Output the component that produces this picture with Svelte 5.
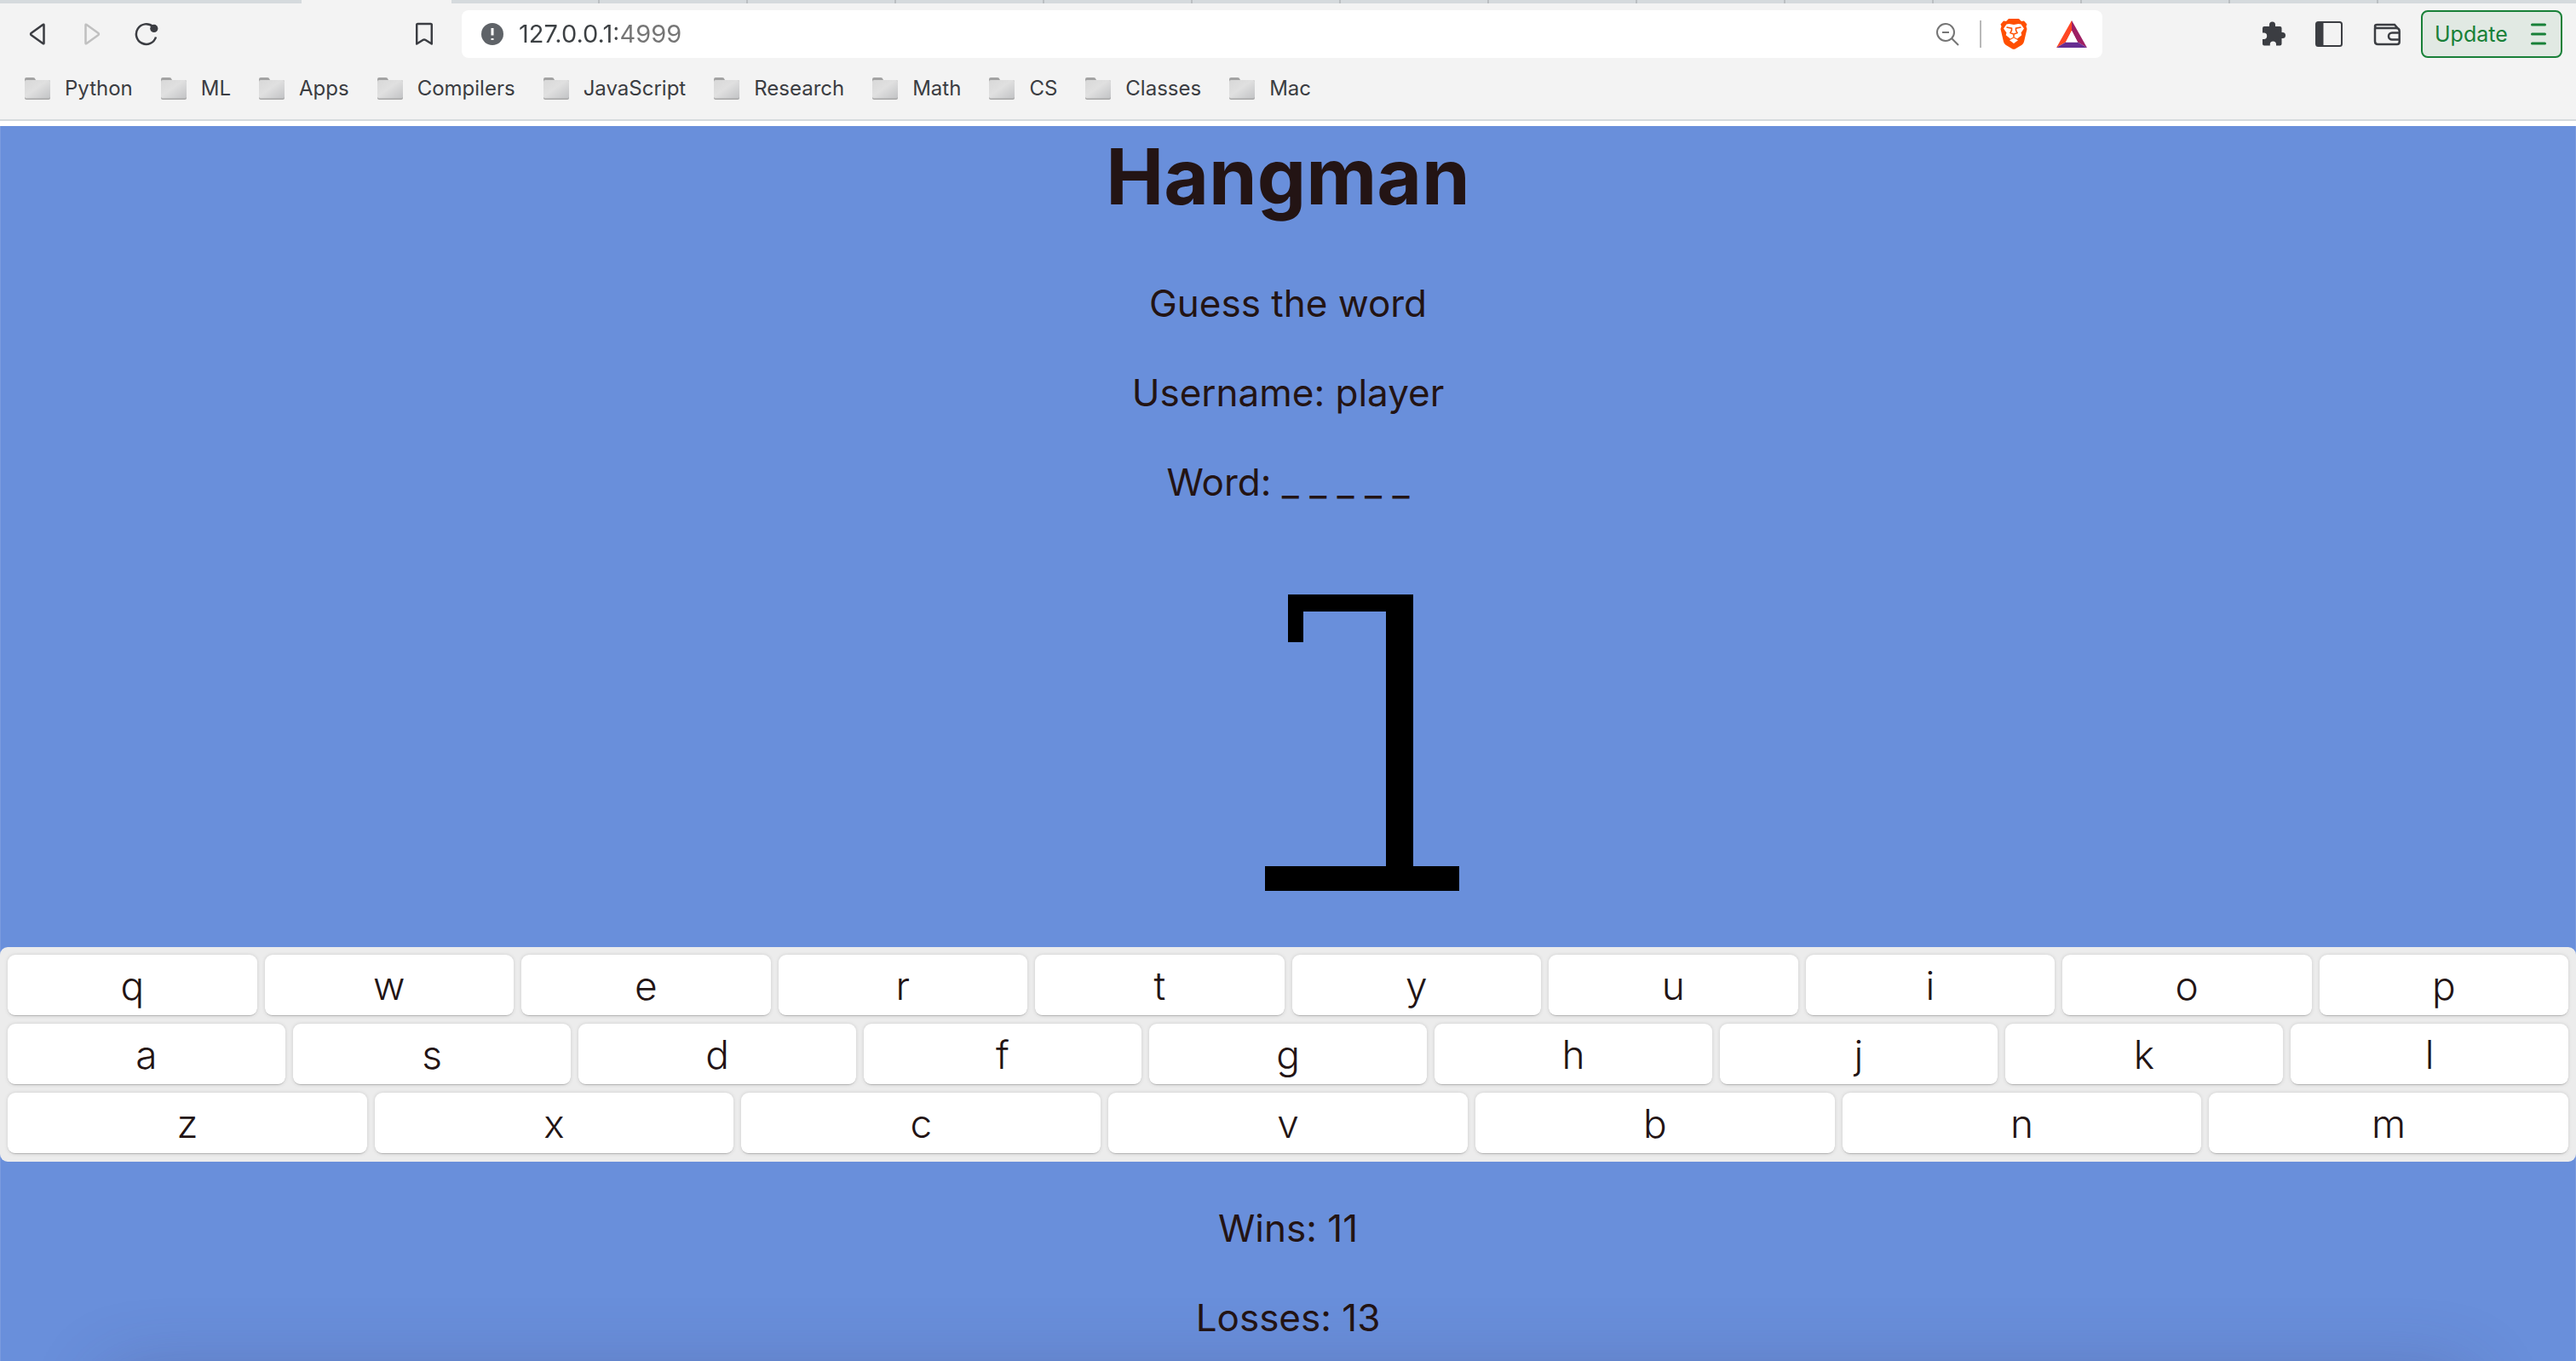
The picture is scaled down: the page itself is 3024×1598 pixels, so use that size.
<script>
  const bookmarks = [
    'Python', 'ML', 'Apps', 'Compilers', 'JavaScript',
    'Research', 'Math', 'CS', 'Classes', 'Mac'
  ];
  const rows = ['qwertyuiop', 'asdfghjkl', 'zxcvbnm'].map((row) => row.split(''));
  const backgroundTabs = Array.from({ length: 13 }, (_, i) => i);

  let address = $state('127.0.0.1:4999');
  const username = 'player';
  const word = '_ _ _ _ _';
  const wins = 11;
  const losses = 13;
</script>

<div class="window">
  <header class="chrome">
    <div class="tabs">
      <span class="tab-lead"></span>
      <span class="tab-active"></span>
      {#each backgroundTabs as tab (tab)}
        <span class="tab"></span>
      {/each}
    </div>

    <div class="toolbar">
      <div class="nav">
        <button type="button" aria-label="Back">
          <svg width="20" height="28" viewBox="0 0 20 28"><path d="M17.5 3.2v21.6q0 .8-.8.4L2.8 15.2q-1.5-1.2 0-2.4L16.7 2.8q.8-.4.8.4z" /></svg>
        </button>
        <button type="button" aria-label="Forward" disabled>
          <svg width="20" height="28" viewBox="0 0 20 28"><path d="M2.5 3.2v21.6q0 .8.8.4l13.9-10q1.5-1.2 0-2.4L3.3 2.8q-.8-.4-.8.4z" /></svg>
        </button>
        <button type="button" aria-label="Reload">
          <svg width="28" height="28" viewBox="0 0 28 28">
            <path d="M21.5 5.2A11.8 11.8 0 1 0 25 17.5" />
            <circle class="solid" cx="22.8" cy="7.4" r="4.6" />
          </svg>
        </button>
      </div>
      <button class="save" type="button" aria-label="Bookmark this page">
        <svg width="20" height="28" viewBox="0 0 20 28"><path d="M1.2 25.5V3.2Q1.2 2 2.4 2h15.2q1.2 0 1.2 1.2v22.3L11.6 21q-1.6-1-3.2 0z" /></svg>
      </button>

      <div class="omnibox">
        <svg class="info" width="26" height="26" viewBox="0 0 26 26">
          <circle cx="13" cy="13" r="13" fill="#5f6368" />
          <path d="M13 6v8.500M13 18v2" stroke="#fff" stroke-width="3" />
        </svg>
        <input class="address" type="text" aria-label="Address" bind:value={address} />
        <button class="zoom" type="button" aria-label="Zoom">
          <svg width="28" height="28" viewBox="0 0 28 28">
            <g fill="none" stroke="#757575" stroke-width="2">
              <circle cx="12" cy="12" r="10" /><path d="M8 12h8M19 19l8 8" />
            </g>
          </svg>
        </button>
        <span class="divider"></span>
        <button class="shield" type="button" aria-label="Shields">
          <svg width="32" height="36" viewBox="0 0 32 36">
            <path fill="#ff4f00" d="M10 0h12l3 3 3-.5 3.500 4-1 2.500 1 3-3.500 15q-.7 2.500-2.500 3.800L18 35.200q-2 1.300-4 0L6.500 30.800Q4.700 29.500 4 27L.5 12l1-3-1-2.500 3.500-4L7 3z" />
            <path fill="#fff" d="M10.500 6l5.500 1 5.500-1 3 .5 3.500 5-3.500 5 .8 2.700-5.300 4.300L16 21.200l-4 2.300-5.300-4.300.8-2.700-3.500-5 3.500-5zM16 22.500l5 2.800-5 3.700-5-3.700z" />
            <path fill="none" stroke="#ff4f00" stroke-width="1.600" d="M7.500 10l6 1.200v2.300l-1.500 3 4 1.700 4-1.700-1.500-3v-2.300l6-1.200M16 18v3.500" />
          </svg>
        </button>
        <button class="rewards" type="button" aria-label="Rewards">
          <svg width="36" height="32" viewBox="0 0 36 32">
            <path fill="#ff4724" d="M18 0v12L11 25.500 0 32z" />
            <path fill="#9e1f63" d="M18 0v12l7 13.500L36 32z" />
            <path fill="#662d91" d="M0 32l11-6.500h14L36 32z" />
            <path fill="#fff" d="M18 12l-7 13.500h14z" />
          </svg>
        </button>
      </div>

      <div class="tools">
        <button type="button" aria-label="Extensions">
          <svg class="puzzle" width="32" height="32" viewBox="-3 1 32 32"><path fill="#3b3d42" d="M3 10q0-2 2-2h6V6a3.500 3.500 0 0 1 7 0v2h5.500q2 0 2 2v5h1a3.500 3.500 0 0 1 0 7h-1v6.500q0 2-2 2H19V29a3.600 3.600 0 0 0-7.200 0v1.500H5q-2 0-2-2V23h1.500a3.700 3.700 0 0 0 0-7.400H3z" /></svg>
        </button>
        <button type="button" aria-label="Sidebar">
          <svg width="32" height="32" viewBox="0 0 32 32">
            <rect x="1" y="2" width="30" height="28" rx="2.500" fill="none" stroke="#3b3d42" stroke-width="2" />
            <path d="M1 3h8.500v26H1z" fill="#3b3d42" />
          </svg>
        </button>
        <button type="button" aria-label="Wallet">
          <svg width="32" height="32" viewBox="0 0 32 32">
            <g fill="none" stroke="#3b3d42" stroke-width="2.500">
              <path d="M2 8.500v16q0 3.500 3.500 3.500H28q2.700 0 2.700-2.700V12.500Q30.700 9 27 9H4.500Q2 9 2 7t2.500-2H25l4.500 5" />
              <path d="M30.500 14.500H22a4 4 0 0 0 0 8h8.500" />
            </g>
          </svg>
        </button>
      </div>

      <button class="update" type="button">
        <span>Update</span>
        <svg width="18" height="26" viewBox="0 0 18 26"><path d="M1.500 2h15M1.500 13h15M1.500 24h15" stroke="#188038" stroke-width="3" stroke-linecap="round" /></svg>
      </button>
    </div>

    <nav class="bookmarks" aria-label="Bookmarks">
      {#each bookmarks as name (name)}
        <a href="#{name}">
          <svg width="30" height="26" viewBox="0 0 30 26">
            <defs>
              <linearGradient id="folder-{name}" x1="0" y1="0" x2="1" y2="1">
                <stop offset="0" stop-color="#d8d8d8" />
                <stop offset=".45" stop-color="#e0e0e0" />
                <stop offset="1" stop-color="#c2c3c5" />
              </linearGradient>
            </defs>
            <path fill="#a3a3a3" d="M0 6V2Q0 0 2 0h8q2 0 2.500 2l.5 1v3z" />
            <rect y="3" width="30" height="23" rx="2" fill="#a6a6a6" />
            <rect y="3" width="30" height="21.500" rx="2" fill="url(#folder-{name})" />
          </svg>
          <span>{name}</span>
        </a>
      {/each}
    </nav>
  </header>

  <main class="game">
    <h1>Hangman</h1>
    <p>Guess the word</p>
    <p>Username: {username}</p>
    <p>Word: {word}</p>

    <div class="gallows">
      <svg width="404" height="348" viewBox="0 0 404 348" role="img" aria-label="Gallows">
        <path d="M202 0h147v319h54v29H175v-29h142V20h-97v36h-18z" />
      </svg>
    </div>

    <div class="keyboard">
      {#each rows as row, i (i)}
        <div class="row">
          {#each row as key (key)}
            <button type="button">{key}</button>
          {/each}
        </div>
      {/each}
    </div>

    <div class="score">
      <p>Wins: {wins}</p>
      <p>Losses: {losses}</p>
    </div>
  </main>
</div>

<style>
  :global(body) {
    margin: 0;
  }

  .window {
    display: flex;
    flex-direction: column;
    min-height: 100vh;
    font-family: Inter, 'Liberation Sans', sans-serif;
  }

  button {
    margin: 0;
    padding: 0;
    border: 0;
    background: none;
    font: inherit;
    color: inherit;
  }

  svg {
    display: block;
  }

  .chrome {
    background: #f3f3f3;
    border-bottom: 2px solid #d5dadd;
  }

  .tabs {
    display: flex;
    height: 4px;
    overflow: hidden;
    background: #d5dadd;
  }

  .tab-lead,
  .tab-active,
  .tab {
    box-sizing: border-box;
    flex: none;
    width: 174px;
  }

  .tab-lead {
    width: 354px;
  }

  .tab-active {
    width: 176px;
    background: #f3f3f3;
  }

  .tab {
    border-right: 2px solid #bbbfc2;
  }

  .toolbar {
    display: flex;
    align-items: center;
    height: 56px;
    padding: 8px 16px 0 34px;
  }

  .nav {
    display: flex;
    gap: 44px;
  }

  .nav svg,
  .save svg {
    fill: none;
    stroke: #3b3d42;
    stroke-width: 2.5;
    stroke-linejoin: round;
  }

  .nav button:last-child {
    margin-left: -4px;
  }

  .nav button:disabled svg {
    stroke: #c0c0c0;
  }

  .nav .solid {
    fill: #3b3d42;
    stroke: none;
  }

  .save {
    margin-left: 302px;
  }

  .omnibox {
    display: flex;
    flex: 1;
    align-items: center;
    height: 56px;
    margin-left: 34px;
    padding: 0 18px 0 23px;
    box-sizing: border-box;
    border-radius: 8px;
    background: #fff;
  }

  .address {
    flex: 1;
    min-width: 0;
    height: 40px;
    margin-left: 18px;
    padding: 0;
    border: 0;
    outline: 0;
    background: linear-gradient(90deg, #3c4043 115px, #757575 115px);
    background-clip: text;
    -webkit-text-fill-color: transparent;
    caret-color: #3c4043;
    font: 29px/40px Inter, 'Liberation Sans', sans-serif;
  }

  .divider {
    width: 2px;
    height: 32px;
    margin: 0 22px 0 24px;
    background: #b8b8b8;
  }

  .rewards {
    margin-left: 34px;
  }

  .tools {
    display: flex;
    gap: 36px;
    margin: 0 24px 0 182px;
  }

  .puzzle {
    overflow: visible;
  }

  .update {
    display: flex;
    align-items: center;
    justify-content: space-between;
    box-sizing: border-box;
    width: 166px;
    height: 56px;
    padding: 0 17px 0 14px;
    border: 2px solid #188038;
    border-radius: 8px;
    background: #e1e9e3;
    color: #188038;
    font-size: 25px;
  }

  .bookmarks {
    display: flex;
    gap: 33px;
    padding: 20px 28px 20px 29px;
  }

  .bookmarks a {
    display: flex;
    align-items: center;
    gap: 17px;
    height: 32px;
    color: #3b3d42;
    font-size: 24px;
    line-height: 32px;
    text-decoration: none;
  }

  .game {
    position: relative;
    flex: 1;
    overflow: hidden;
    border-top: 6px solid #fff;
    background: #698fdb;
    box-shadow: inset 1px 0 #7a9bdf, inset -1px 0 #7a9bdf;
    color: #231414;
    text-align: center;
  }

  /* Soft shade rising from the lower edge of the window */
  .game::after {
    content: '';
    position: absolute;
    right: 130px;
    bottom: -220px;
    left: 130px;
    height: 200px;
    box-shadow: 0 0 90px rgba(60, 50, 90, 0.3);
  }

  h1 {
    margin: 0 0 62px;
    font-size: 91px;
    font-weight: 700;
    line-height: 118px;
  }

  p {
    margin: 0 0 48px;
    font-size: 44px;
    line-height: 57px;
  }

  .gallows {
    display: flex;
    justify-content: center;
    padding: 55px 0 66px;
  }

  .keyboard {
    display: flex;
    flex-direction: column;
    gap: 9px;
    padding: 9px;
    border-radius: 9px;
    background: #ececec;
  }

  .row {
    display: flex;
    gap: 9px;
  }

  .row button {
    flex: 1;
    box-sizing: border-box;
    height: 72px;
    border-bottom: 1px solid #b5b5b5;
    border-radius: 9px;
    background: #fff;
    box-shadow: 0 0 5px -1px rgba(0, 0, 0, 0.2);
    font-size: 46px;
    font-weight: 300;
    line-height: 56px;
  }

  .score {
    padding-top: 50px;
  }

  .score p:last-child {
    margin-bottom: 22px;
  }
</style>
